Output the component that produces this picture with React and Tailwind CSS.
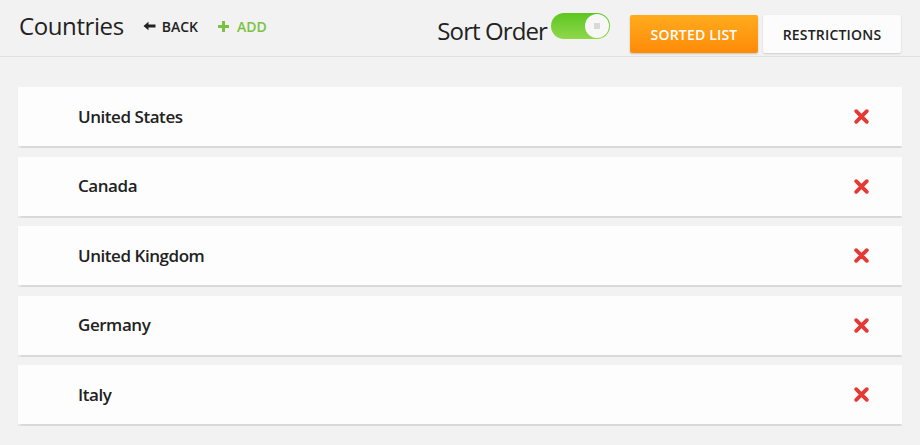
import { useState } from "react";

const countries = ["United States", "Canada", "United Kingdom", "Germany", "Italy"];

function RemoveIcon() {
  return (
    <svg width="17" height="17" viewBox="0 0 16 16" className="text-[#e53935]">
      <path d="M3 3 L13 13 M13 3 L3 13" stroke="currentColor" strokeWidth="3.6" strokeLinecap="round" />
    </svg>
  );
}

export default function App() {
  const [sorted, setSorted] = useState(true);

  return (
    <div
      className="w-[920px] h-[445px] bg-[#f2f2f2] text-[#222]"
      style={{ fontFamily: '"Open Sans", "Liberation Sans", sans-serif' }}
    >
      {/* Header */}
      <div className="h-[57px] flex items-center border-b border-[#e0e0e0] pl-[19px] pr-[19px]">
        <h1 className="text-[24px] font-normal tracking-[-0.4px] text-[#222] leading-none -mt-[4px]">Countries</h1>
        <button className="ml-[19px] -mt-[4px] flex items-center gap-[6px] text-[14px] font-semibold text-[#222]">
          <svg width="13" height="10" viewBox="0 0 13 10">
            <path d="M0.5 5 L5.5 0.8 L5.5 3.5 L12.5 3.5 L12.5 6.5 L5.5 6.5 L5.5 9.2 Z" fill="currentColor" />
          </svg>
          BACK
        </button>
        <button className="ml-[20px] -mt-[4px] flex items-center gap-[8px] text-[14px] font-semibold text-[#7cc242]">
          <svg width="11" height="11" viewBox="0 0 11 11">
            <path d="M4 0 H7 V4 H11 V7 H7 V11 H4 V7 H0 V4 H4 Z" fill="currentColor" />
          </svg>
          ADD
        </button>

        <div className="ml-auto flex items-start self-start mt-[13px]">
          <span className="text-[24px] leading-none tracking-[-0.9px] text-[#222] mt-[6px]">Sort Order</span>
          <button
            onClick={() => setSorted((v) => !v)}
            className={`ml-[4px] w-[59px] h-[26px] rounded-full p-[1px] flex items-center ${
              sorted ? "justify-end bg-gradient-to-b from-[#5cc61e] to-[#8fd84a]" : "justify-start bg-[#ccc]"
            }`}
          >
            <span className="w-[24px] h-[24px] rounded-full bg-[#f7f7f7] flex items-center justify-center">
              <span className="w-[6px] h-[6px] bg-[#d9d9d9]" />
            </span>
          </button>
        </div>

        <div className="ml-[20px] flex items-center gap-[5px] self-end mb-[3px]">
          <button className="h-[38px] w-[128px] rounded-[2px] bg-gradient-to-b from-[#ffab1d] to-[#ff8a05] text-white text-[14px] font-semibold tracking-[0.2px] shadow-[0_1px_2px_rgba(0,0,0,0.2)]">
            SORTED LIST
          </button>
          <button className="h-[38px] w-[138px] rounded-[2px] bg-[#fcfcfc] text-[#222] text-[14px] font-semibold tracking-[0.2px] shadow-[0_1px_2px_rgba(0,0,0,0.15)]">
            RESTRICTIONS
          </button>
        </div>
      </div>

      {/* List */}
      <div className="px-[18px] pt-[30px] flex flex-col gap-[10.5px]">
        {countries.map((c) => (
          <div
            key={c}
            className="h-[59px] bg-[#fdfdfd] flex items-center pl-[60px] pr-[32px] shadow-[0_1.5px_1px_rgba(0,0,0,0.1)]"
          >
            <span className="text-[17px] font-semibold tracking-[-0.45px] text-[#222]">{c}</span>
            <span className="ml-auto">
              <RemoveIcon />
            </span>
          </div>
        ))}
      </div>
    </div>
  );
}
